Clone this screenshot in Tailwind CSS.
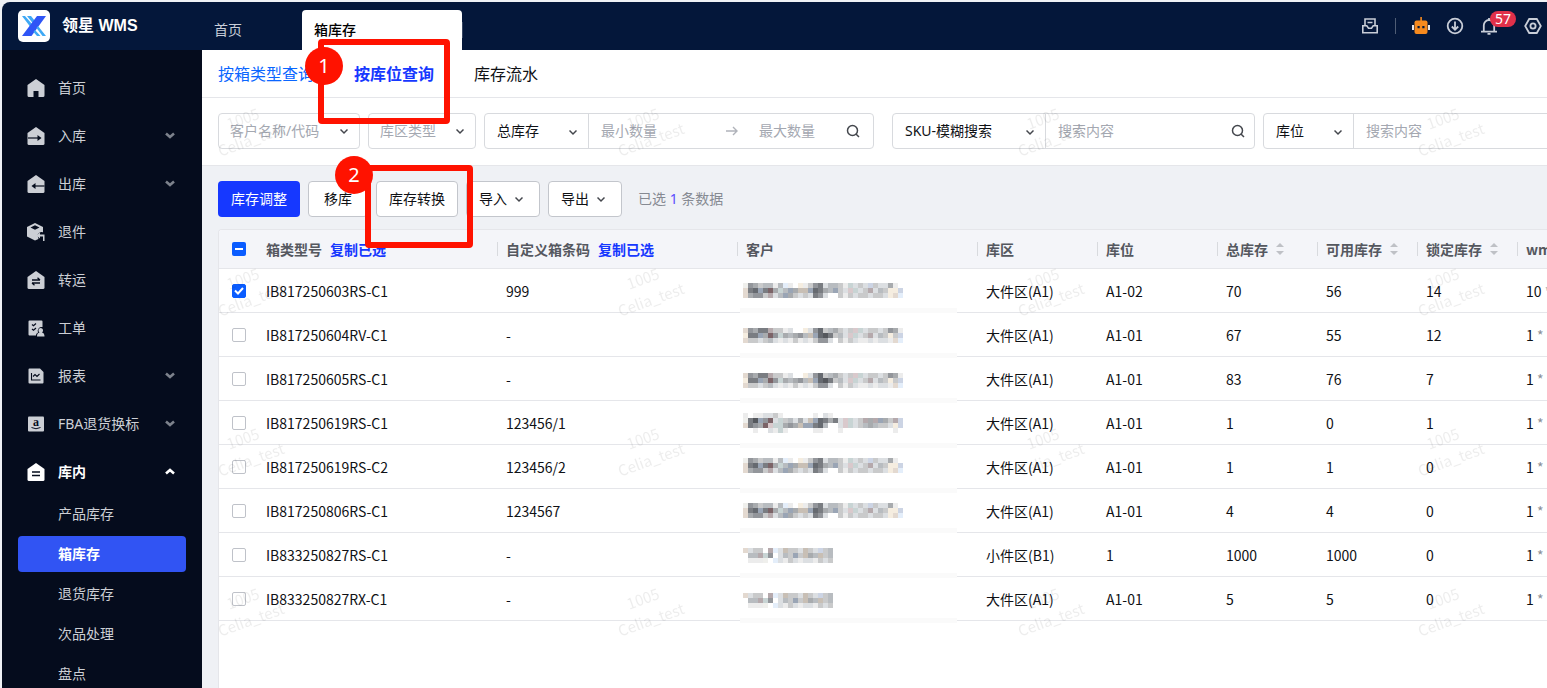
<!DOCTYPE html>
<html lang="zh">
<head>
  <meta charset="UTF-8" />
  <meta name="viewport" content="width=device-width, initial-scale=1.0">
  <title>领星 WMS - 箱库存</title>
  <script src="https://cdn.jsdelivr.net/npm/@tailwindcss/browser@4"></script>
</head>
<body class="bg-[#eff1f5] text-[#0f1115] text-sm font-['Noto_Sans','Noto_Sans_CJK_SC',sans-serif]">
  <div class="relative h-screen flex flex-col overflow-hidden pt-0.5 pl-0.5">

    <!-- 顶部栏 -->
    <header class="h-12 shrink-0 flex bg-[#04173a] rounded-tl-lg text-[#c9ced8]">
      <div class="w-[200px] shrink-0 flex items-center gap-3 pl-4">
        <svg class="size-8" viewBox="0 0 32 32">
          <rect width="32" height="32" rx="5" fill="#fff"/>
          <path d="M4 6h3l7 8-2 2.500zM9 6h4l4 5-2 2.500z" fill="#3fa9f5"/>
          <path d="M19 6h9L13.500 26H4z" fill="#2f55f6"/>
          <path d="M20 16l8 10h-3.500l-6-8zM17 20l5.500 6h-3.500l-3.500-4z" fill="#3fa9f5"/>
        </svg>
        <span class="text-base font-bold text-white font-['Liberation_Sans','Noto_Sans_CJK_SC',sans-serif]">领星 WMS</span>
      </div>
      <nav class="flex-1 flex items-end">
        <a href="#" class="w-[100px] h-10 flex items-center pl-3">首页</a>
        <a href="#" class="w-40 h-10 flex items-center pl-3 rounded-t bg-white text-black font-medium">箱库存</a>
        <span class="w-px h-4 mb-3 bg-white/20"></span>
      </nav>
      <div class="flex items-center gap-4 pr-[5px]">
        <button aria-label="收件箱"><svg class="size-[18px]" viewBox="0 0 18 18" fill="none" stroke="currentColor" stroke-width="1.6"><path d="M4 8V2h10v6M6.500 5.500h5M1.800 8.800h4l1.700 2.400h3l1.700-2.400h4v7H1.800z"/></svg></button>
        <span class="w-px h-4 bg-white/30"></span>
        <button aria-label="机器人"><svg class="size-[18px]" viewBox="0 0 18 18"><path d="M0 8h2v5H0zM16 8h2v5h-2z" fill="#e8e8ea"/><path d="M8.300 0h1.600v4H8.300z" fill="#f68a1e"/><rect x="2.500" y="3.500" width="13" height="13.500" rx="2" fill="#f68a1e"/><path d="M5.500 9h2.200v2.200H5.500zM10.300 9h2.200v2.200h-2.200z" fill="#04173a"/></svg></button>
        <button aria-label="下载"><svg class="size-[18px]" viewBox="0 0 18 18" fill="none" stroke="currentColor" stroke-width="1.8"><circle cx="9" cy="9" r="7.300"/><path d="M9 4.500v8M5.800 9.500L9 12.700l3.200-3.200"/></svg></button>
        <button aria-label="通知" class="relative mr-2.5"><svg class="size-[18px]" viewBox="0 0 18 18" fill="none" stroke="currentColor" stroke-width="1.800"><path d="M9 1v1.500M3.800 14.500V8.200a5.200 5.200 0 0 1 10.400 0v6.300M1 14.700h16M7.500 16.800h3"/></svg><span class="absolute -top-1.5 left-2.5 w-[26px] h-4 rounded-lg bg-[#e0304a] text-white text-sm leading-4 text-center">57</span></button>
        <button aria-label="设置"><svg class="size-[18px]" viewBox="0 0 18 18" fill="none" stroke="currentColor" stroke-width="1.8"><path d="M5.200 2h7.600l4 7-4 7H5.200l-4-7z"/><circle cx="9" cy="9" r="2.600"/></svg></button>
      </div>
    </header>

    <div class="flex-1 flex min-h-0">
      <!-- 侧边菜单 -->
      <aside class="w-[200px] shrink-0 bg-[#050c1d] text-[#cccfd5] pt-3.5 overflow-hidden">
        <ul id="menu"></ul>
        <ul id="submenu" class="flex flex-col gap-1 px-4"></ul>
      </aside>

      <main class="flex-1 min-w-0 flex flex-col">
        <!-- 页签 -->
        <nav class="h-12 shrink-0 flex items-center gap-10 px-4 bg-white border-b border-[#e5e6ea] text-base whitespace-nowrap">
          <a href="#" class="text-[#0a66ff]">按箱类型查询</a>
          <a href="#" class="text-[#1638ff] font-bold">按库位查询</a>
          <a href="#">库存流水</a>
        </nav>

        <!-- 筛选条件 -->
        <form class="h-[68px] shrink-0 flex items-center gap-2 pl-4 pb-0.5 bg-white border-b border-[#e5e6ea] overflow-hidden">
          <div class="relative w-[142px] h-9 shrink-0">
            <select aria-label="客户名称/代码" class="appearance-none size-full pl-[11px] border border-[#d8dade] rounded text-[#a4a8b1]"><option>客户名称/代码</option></select>
            <svg class="absolute right-3 top-3.5 w-2 h-2 pointer-events-none" viewBox="0 0 8 8" fill="none" stroke="#44474d" stroke-width="1.5"><path d="M0.500 2.500L4 6l3.500-3.500"/></svg>
          </div>
          <div class="relative w-[108px] h-9 shrink-0">
            <select aria-label="库区类型" class="appearance-none size-full pl-[11px] border border-[#d8dade] rounded text-[#a4a8b1]"><option>库区类型</option></select>
            <svg class="absolute right-3 top-3.5 w-2 h-2 pointer-events-none" viewBox="0 0 8 8" fill="none" stroke="#44474d" stroke-width="1.5"><path d="M0.500 2.500L4 6l3.500-3.500"/></svg>
          </div>
          <div class="w-[390px] h-9 shrink-0 flex items-center border border-[#d8dade] rounded mr-2.5">
            <div class="relative w-[104px] h-full">
              <select aria-label="库存类型" class="appearance-none size-full pl-3 border-r border-[#d8dade]"><option>总库存</option></select>
              <svg class="absolute right-3 top-3.5 w-2 h-2 pointer-events-none" viewBox="0 0 8 8" fill="none" stroke="#44474d" stroke-width="1.500"><path d="M0.500 2.500L4 6l3.500-3.500"/></svg>
            </div>
            <input aria-label="最小数量" class="w-[137px] pl-3 placeholder:text-[#a4a8b1]" placeholder="最小数量">
            <svg class="size-3" viewBox="0 0 12 12" fill="none" stroke="#b0b3ba" stroke-width="1.400"><path d="M0 6h11M7 2l4 4-4 4"/></svg>
            <input aria-label="最大数量" class="flex-1 min-w-0 pl-[21px] placeholder:text-[#a4a8b1]" placeholder="最大数量">
            <button type="button" aria-label="搜索" class="mr-3"><svg class="size-4" viewBox="0 0 16 16" fill="none" stroke="#44474d" stroke-width="1.500"><circle cx="7.500" cy="7.500" r="5"/><path d="M11 11l3 3"/></svg></button>
          </div>
          <div class="w-[363px] h-9 shrink-0 flex items-center border border-[#d8dade] rounded">
            <div class="relative w-[153px] h-full">
              <select aria-label="搜索方式" class="appearance-none size-full pl-3 border-r border-[#d8dade]"><option>SKU-模糊搜索</option></select>
              <svg class="absolute right-3 top-3.5 w-2 h-2 pointer-events-none" viewBox="0 0 8 8" fill="none" stroke="#44474d" stroke-width="1.500"><path d="M0.500 2.500L4 6l3.500-3.500"/></svg>
            </div>
            <input aria-label="搜索内容" class="flex-1 min-w-0 pl-3 placeholder:text-[#a4a8b1]" placeholder="搜索内容">
            <button type="button" aria-label="搜索" class="mr-2"><svg class="size-4" viewBox="0 0 16 16" fill="none" stroke="#44474d" stroke-width="1.500"><circle cx="7.500" cy="7.500" r="5"/><path d="M11 11l3 3"/></svg></button>
          </div>
          <div class="w-[363px] h-9 shrink-0 flex items-center border border-[#d8dade] rounded">
            <div class="relative w-[90px] h-full">
              <select aria-label="位置类型" class="appearance-none size-full pl-3 border-r border-[#d8dade]"><option>库位</option></select>
              <svg class="absolute right-3 top-3.5 w-2 h-2 pointer-events-none" viewBox="0 0 8 8" fill="none" stroke="#44474d" stroke-width="1.500"><path d="M0.500 2.500L4 6l3.500-3.500"/></svg>
            </div>
            <input aria-label="库位搜索内容" class="flex-1 min-w-0 pl-3 placeholder:text-[#a4a8b1]" placeholder="搜索内容">
          </div>
        </form>

        <!-- 操作按钮 -->
        <div class="h-[63px] shrink-0 flex items-center gap-2 pl-4 pt-[3px] whitespace-nowrap">
          <button class="w-[82px] h-9 rounded bg-[#1638ff] text-white">库存调整</button>
          <button class="w-[60px] h-9 rounded border border-[#c3c6cc] bg-white">移库</button>
          <button class="w-[82px] h-9 rounded border border-[#c3c6cc] bg-white">库存转换</button>
          <button class="w-[74px] h-9 rounded border border-[#c3c6cc] bg-white flex items-center pl-3 gap-2">导入<svg class="w-2 h-2" viewBox="0 0 8 8" fill="none" stroke="#44474d" stroke-width="1.500"><path d="M0.500 2.500L4 6l3.500-3.500"/></svg></button>
          <button class="w-[74px] h-9 rounded border border-[#c3c6cc] bg-white flex items-center pl-3 gap-2">导出<svg class="w-2 h-2" viewBox="0 0 8 8" fill="none" stroke="#44474d" stroke-width="1.500"><path d="M0.500 2.500L4 6l3.500-3.500"/></svg></button>
          <span class="ml-2 text-[#868a92]">已选 <span class="text-[#5a4bff]">1</span> 条数据</span>
        </div>

        <!-- 库存列表 -->
        <div class="relative flex-1 min-h-0 ml-4 overflow-hidden bg-white border-t border-l border-[#e5e6ea] rounded-tl font-['Noto_Sans_CJK_SC',sans-serif]">
          <table class="table-fixed w-full min-w-[1540px] border-separate border-spacing-0 whitespace-nowrap">
            <colgroup>
              <col class="w-[39px]"><col class="w-60"><col class="w-60"><col class="w-60"><col class="w-[120px]"><col class="w-[120px]"><col class="w-[100px]"><col class="w-[100px]"><col class="w-[100px]"><col>
            </colgroup>
            <thead>
              <tr id="head" class="h-[39px] bg-[#f4f5f9] text-[#55585f]"></tr>
            </thead>
            <tbody id="rows"></tbody>
          </table>
          <svg id="masked" class="absolute left-[521px] top-[39px] w-[217px] h-[360px]" shape-rendering="crispEdges" role="img" aria-label="客户名称已脱敏"></svg>
        </div>
      </main>
    </div>

    <!-- 水印 -->
    <svg class="absolute left-[218px] right-0 top-[100px] bottom-0 w-full h-full pointer-events-none" aria-hidden="true">
      <defs>
        <pattern id="wm" width="400" height="160" patternUnits="userSpaceOnUse">
          <g fill="#000" fill-opacity="0.070" font-size="15" text-anchor="middle" font-family="Noto Sans CJK SC">
            <text transform="translate(27 24) rotate(-20)">1005</text>
            <text transform="translate(35 45) rotate(-20)">Celia_test</text>
          </g>
        </pattern>
      </defs>
      <rect width="100%" height="100%" fill="url(#wm)"/>
    </svg>

    <!-- 步骤标注 -->
    <div class="absolute left-[318px] top-[39px] w-[132px] h-[85px] border-6 border-[#ff1200] rounded-sm"></div>
    <div class="absolute left-[305px] top-[47px] size-[38px] rounded-full bg-[#ff1200] text-white text-xl flex items-center justify-center">1</div>
    <div class="absolute left-[365px] top-[165px] w-[108px] h-[83px] border-6 border-[#ff1200] rounded-sm"></div>
    <div class="absolute left-[335px] top-[156px] size-[38px] rounded-full bg-[#ff1200] text-white text-xl flex items-center justify-center">2</div>
  </div>

  <script>
    const house = '<path d="M9 0l8.500 6v10.500a1.500 1.500 0 0 1-1.500 1.500H2a1.500 1.500 0 0 1-1.500-1.500V6z" fill="currentColor"/>';
    const icons = {
      home: '<path d="M9 0l8.500 6v10.500a1.500 1.500 0 0 1-1.500 1.500h-4.500v-6h-5v6H2a1.500 1.500 0 0 1-1.500-1.500V6z" fill="currentColor"/>',
      inbound: house + '<path d="M1 11h11" stroke="#050c1d" stroke-width="1.2"/><path d="M10.500 8l4 3-4 3z" fill="#050c1d"/>',
      outbound: house + '<path d="M17.500 11H7" stroke="#050c1d" stroke-width="1.2"/><path d="M8.500 8l-4 3 4 3z" fill="#050c1d"/>',
      back: '<path d="M8 0l8 4v5.500c-2-1-4 0-5.500 2.500l1 4-3.500 1.500-8-4V4z" fill="currentColor"/><path d="M8 2.200L12.500 4.500 8 6.800 3.500 4.500z" fill="#050c1d"/><path d="M13 9.500v2h4.500V18H16v-4.500h-3v2L9.500 12.500z" fill="currentColor"/>',
      transfer: house + '<path d="M5 9h8M5 12h8M10.500 6.800L13 9M7.500 14.200L5 12" stroke="#050c1d" stroke-width="1.3"/>',
      order: '<path d="M2.500 1.500h12a1 1 0 0 1 1 1V8a4 4 0 0 0-4.500 5.500c-1.500.8-2 1.800-2 3H2.500a1 1 0 0 1-1-1v-13a1 1 0 0 1 1-1z" fill="currentColor"/><path d="M5 5.500l1.500 1.300L9 4.500M5 10l1.500 1.300L9 9" stroke="#050c1d" stroke-width="1.2" fill="none"/><path d="M13.700 9a2.400 2.400 0 0 1 1.300 4.400c1.800.4 2.500 1.600 2.500 4H10c0-2.400.7-3.600 2.500-4A2.400 2.400 0 0 1 13.700 9z" fill="currentColor"/>',
      report: '<path d="M2.500 1.500h10.500l3.500 3.500v10.500a1 1 0 0 1-1 1h-13a1 1 0 0 1-1-1v-13a1 1 0 0 1 1-1z" fill="currentColor"/><path d="M4.500 6v7h9M6 9.500l2-2 2 2L12.500 7" stroke="#050c1d" stroke-width="1.1" fill="none"/>',
      fba: '<rect x="1" y="1.500" width="16" height="15" rx="1" fill="currentColor"/><text x="9" y="11" text-anchor="middle" font-size="12" font-weight="bold" font-family="Liberation Serif" fill="#050c1d">a</text><path d="M4.500 12.500q4.500 2.500 9 0" stroke="#050c1d" fill="none"/>',
      stock: house + '<path d="M5 9h8M5 12.500h8" stroke="#050c1d" stroke-width="1.300"/>',
    };

    const menu = [
      ["首页", "home", ""],
      ["入库", "inbound", "down"],
      ["出库", "outbound", "down"],
      ["退件", "back", ""],
      ["转运", "transfer", ""],
      ["工单", "order", ""],
      ["报表", "report", "down"],
      ["FBA退货换标", "fba", "down"],
      ["库内", "stock", "up"],
    ];
    const arrows = {
      "": "",
      down: '<svg class="w-2.5 h-2 text-[#7d828c]" viewBox="0 0 10 8" fill="none" stroke="currentColor" stroke-width="2.6"><path d="M1 1.500L5 5l4-3.500"/></svg>',
      up: '<svg class="w-2.5 h-2" viewBox="0 0 10 8" fill="none" stroke="currentColor" stroke-width="2.6"><path d="M1 5.500L5 2l4 3.500"/></svg>',
    };
    document.getElementById("menu").innerHTML = menu.map(([name, icon, arrow]) => `
      <li><a href="#" class="h-12 flex items-center pl-[25px] pr-[27px] ${arrow === "up" ? "text-white font-bold" : ""}">
        <svg class="size-[18px] mr-[13px]" viewBox="0 0 18 18">${icons[icon]}</svg>
        <span class="flex-1">${name}</span>${arrows[arrow]}
      </a></li>`).join("");

    document.getElementById("submenu").innerHTML = ["产品库存", "箱库存", "退货库存", "次品处理", "盘点"].map(name => `
      <li><a href="#" class="h-9 flex items-center pl-10 rounded ${name === "箱库存" ? "bg-[#3154f3] text-white font-bold" : ""}">${name}</a></li>`).join("");

    // 表头：名称、是否可复制、是否可排序
    const columns = [
      ["箱类型号", true, false], ["自定义箱条码", true, false], ["客户", false, false],
      ["库区", false, false], ["库位", false, false],
      ["总库存", false, true], ["可用库存", false, true], ["锁定库存", false, true], ["wm", false, false],
    ];
    const copyLink = '<a href="#" class="ml-2 text-[#1638ff]">复制已选</a>';
    const sorter = '<svg class="ml-2 w-2 h-3" viewBox="0 0 8 12" fill="#bfc1c6"><path d="M4 0l4 4H0zM4 12l4-4H0z"/></svg>';
    document.getElementById("head").innerHTML = `
      <th class="border-b border-[#e5e6ea] p-0 pl-[13px]"><span class="relative block size-3.5">
        <input type="checkbox" id="all" aria-label="全选" class="appearance-none block size-3.5 rounded-xs bg-[#0a5cff]">
        <svg class="absolute inset-0 size-3.5 pointer-events-none" viewBox="0 0 14 14"><path d="M3 7h8" stroke="#fff" stroke-width="2"/></svg>
      </span></th>` + columns.map(([name, copy, sort], i) => `
      <th class="border-b border-[#e5e6ea] p-0 text-left font-bold"><div class="flex items-center h-3.5 pl-2 ${i < 8 ? "border-r border-[#d8dade]" : ""}">${name}${copy ? copyLink : ""}${sort ? sorter : ""}</div></th>`).join("");
    document.getElementById("all").indeterminate = true;

    const data = [
      ["IB817250603RS-C1", "999", "大件区(A1)", "A1-02", 70, 56, 14, 10],
      ["IB817250604RV-C1", "-", "大件区(A1)", "A1-01", 67, 55, 12, 1],
      ["IB817250605RS-C1", "-", "大件区(A1)", "A1-01", 83, 76, 7, 1],
      ["IB817250619RS-C1", "123456/1", "大件区(A1)", "A1-01", 1, 0, 1, 1],
      ["IB817250619RS-C2", "123456/2", "大件区(A1)", "A1-01", 1, 1, 0, 1],
      ["IB817250806RS-C1", "1234567", "大件区(A1)", "A1-01", 4, 4, 0, 1],
      ["IB833250827RS-C1", "-", "小件区(B1)", "1", 1000, 1000, 0, 1],
      ["IB833250827RX-C1", "-", "大件区(A1)", "A1-01", 5, 5, 0, 1],
    ];
    const td = text => `<td class="border-b border-[#e5e6ea] p-0 pl-2">${text}</td>`;
    document.getElementById("rows").innerHTML = data.map(([box, code, area, bin, total, usable, locked, wms], i) => `
      <tr class="h-11">
        <td class="border-b border-[#e5e6ea] p-0 pl-[13px]"><span class="relative block size-3.5">
          <input type="checkbox" aria-label="${box}" ${i === 0 ? "checked" : ""} class="peer appearance-none block size-3.5 rounded-xs border border-[#bfc2c9] bg-white checked:bg-[#0a5cff] checked:border-[#0a5cff]">
          <svg class="absolute inset-0 size-3.5 pointer-events-none hidden peer-checked:block" viewBox="0 0 14 14" fill="none" stroke="#fff" stroke-width="2"><path d="M3 6.500l3 3 5-5.500"/></svg>
        </span></td>
        ${[box, code, "", area, bin, total, usable, locked].map(td).join("")}
        ${td(`${wms} <span class="text-[#8b8f97]">*</span>`)}
      </tr>`).join("");

    // 客户名称打码：每个字符对应一个 5px 色块
    const tone = {
      a: "#efefec", b: "#e3d9d0", c: "#f5ede0", d: "#dcdfe2", e: "#c9cacb", f: "#b8bcc0", g: "#a8abae",
      h: "#93969b", i: "#7a7d82", j: "#666a70", k: "#55585d", l: "#7c6468", m: "#b5a9ac", n: "#d9c9cc",
      o: "#c8d4d4", p: "#ccd4e4", q: "#e4eefa", r: "#9aa5b5", s: "#c8bfb5", t: "#ececec",
    };
    const nameA = ["ahgefftfqt.ctehidffetodedpeddgt.", "bijrilgofrgssrjigfrednodemdfeccp", "bghhemdfrgededihd..etedeedeedcbq"];
    const nameB = ["bhgiimeetd..cdhjefgedenodeedehgt", "ciirglhogfghfsrjkiefdnodemdfecep", "beedefdtdtetdtehhd.etedttdtddtbq"];
    const nameC = ["t.ttddet......t.dt..............", "aikrhldoefdgdsrjigidnodemgmrgemp", "bihglnooghgsrrijf..dnodefgfeedcp", "..t..dtot.....tt...t..........t."];
    const nameD = ["bdee.mqdseedsedpef", ".ffmoh.dferesgfsef", ".ttta.qdtedtddtede"];
    const blocks = [[14, nameA], [59, nameB], [104, nameB], [144, nameC], [189, nameA], [234, nameA], [279, nameD], [324, nameD]];
    const strips = [39, 84, 129, 174, 219, 259, 304, 349];
    document.getElementById("masked").innerHTML =
      strips.map(y => `<rect x="0" y="${y}" width="217" height="5" fill="#fafafa"/>`).join("") +
      blocks.map(([top, lines]) => lines.map((line, r) => [...line].map((c, i) =>
        c === "." ? "" : `<rect x="${3 + i * 5}" y="${top + r * 5}" width="5" height="5" fill="${tone[c]}"/>`
      ).join("")).join("")).join("");
  </script>
</body>
</html>
